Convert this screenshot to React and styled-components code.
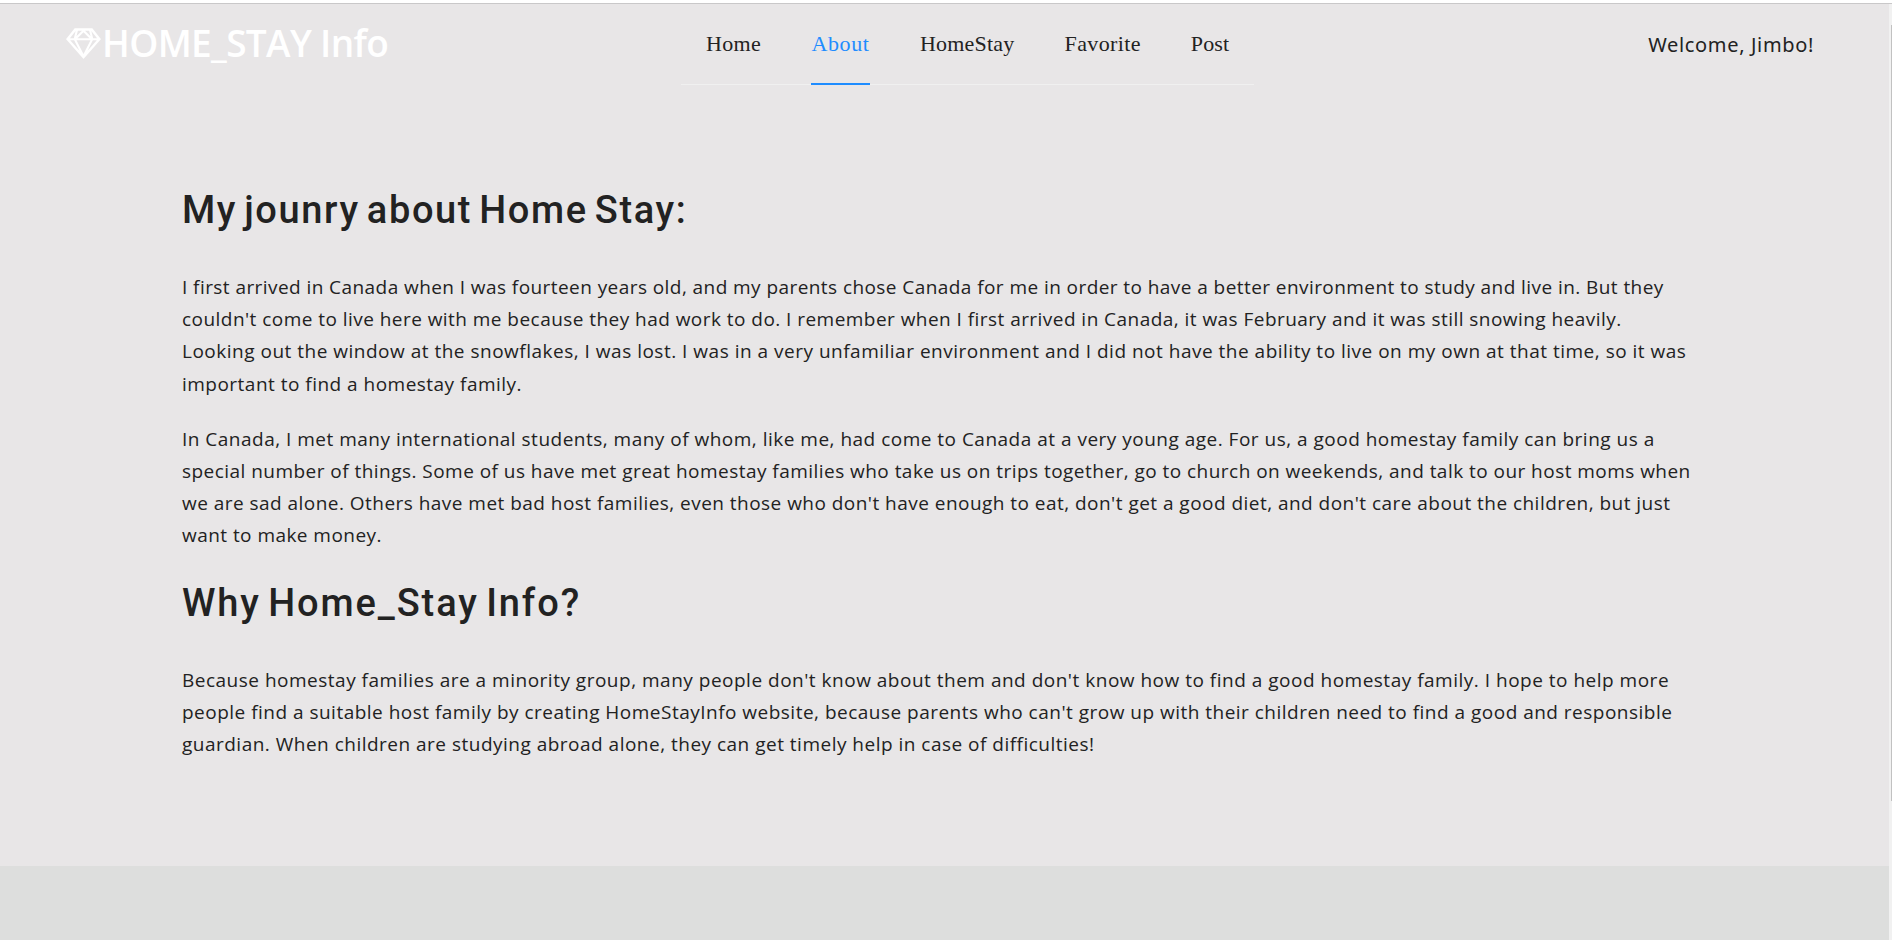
import React from "react";
import styled, { createGlobalStyle } from "styled-components";
import { AiOutlineSketch } from "react-icons/ai";

const GlobalStyle = createGlobalStyle`
  * { box-sizing: border-box; }
  body {
    margin: 0;
    background: #e8e6e7;
    color: #222;
    font-family: "Open Sans", "Noto Sans", sans-serif;
    overflow: hidden;
  }
`;

const Shell = styled.div`
  height: 940px;
  display: flex;
  flex-direction: column;
`;

const TopEdge = styled.div`
  flex: none;
  height: 4px;
  background: #fff;
  border-bottom: 1px solid #c9c8c9;
`;

const Viewport = styled.div`
  flex: 1;
  display: flex;
  min-height: 0;
`;

const Page = styled.div`
  flex: 1;
  display: flex;
  flex-direction: column;
`;

const ScrollTrack = styled.div`
  width: 3px;
  padding: 21px 0 0 2px;
  background: #f1f1f1;
`;

const ScrollThumb = styled.div`
  height: 776px;
  background: #c1c1c1;
`;

const Header = styled.header`
  height: 82px;
  flex: none;
  display: grid;
  grid-template-columns: 681px 573px 1fr;
`;

const Brand = styled.div`
  display: flex;
  align-items: center;
  height: 78px;
  padding-left: 62px;
  color: #fff;

  svg {
    width: 43px;
    height: 43px;
    flex: none;
  }
`;

const BrandName = styled.span`
  font-size: 37px;
  font-weight: 600;
  letter-spacing: -0.65px;
  line-height: 50px;
  white-space: nowrap;
  margin-left: -3px;
`;

const Nav = styled.nav`
  display: flex;
  padding: 0 25px;
  gap: 50px;
  height: 81px;
  border-bottom: 1px solid #f0f0f0;
`;

const NavItem = styled.a`
  width: ${(p) => p.$width}px;
  height: 81px;
  flex: none;
  display: flex;
  justify-content: center;
  font-family: "Liberation Serif", serif;
  font-size: 22px;
  letter-spacing: ${(p) => p.$tracking}px;
  line-height: 80px;
  white-space: nowrap;
  color: ${(p) => (p.$active ? "#1e8cff" : "#222")};
  border-bottom: 2px solid ${(p) => (p.$active ? "#1e8cff" : "transparent")};
`;

const Welcome = styled.div`
  justify-self: end;
  padding-right: 75px;
  font-family: "Noto Sans", sans-serif;
  font-size: 20px;
  letter-spacing: 0.65px;
  line-height: 82px;
  white-space: nowrap;
`;

const Article = styled.main`
  flex: 1;
  padding: 100px 182px 0;
`;

const Title = styled.h1`
  margin: 0 0 37px;
  font-family: Roboto, sans-serif;
  font-size: 38px;
  font-weight: 500;
  line-height: 48px;
  letter-spacing: ${(p) => p.$tracking}px;
  word-spacing: -4px;
`;

const Paragraph = styled.p`
  margin: 0 0 ${(p) => p.$after}px;
  font-size: 19px;
  line-height: 32.2px;
`;

const Line = styled.span`
  display: block;
  white-space: nowrap;
  letter-spacing: ${(p) => p.$tracking}px;
`;

const Footer = styled.footer`
  height: 74px;
  flex: none;
  background: #dddedd;
`;

const links = [
  { label: "Home", width: 55, tracking: 0.3 },
  { label: "About", width: 59, tracking: 0.6, active: true },
  { label: "HomeStay", width: 94.5, tracking: 0.2 },
  { label: "Favorite", width: 76.5, tracking: 0.4 },
  { label: "Post", width: 38, tracking: 0.15 },
];

const sections = [
  {
    title: "My jounry about Home Stay:",
    tracking: 1.63,
    paragraphs: [
      {
        after: 23,
        lines: [
          ["I first arrived in Canada when I was fourteen years old, and my parents chose Canada for me in order to have a better environment to study and live in. But they", 0.43],
          ["couldn't come to live here with me because they had work to do. I remember when I first arrived in Canada, it was February and it was still snowing heavily.", 0.455],
          ["Looking out the window at the snowflakes, I was lost. I was in a very unfamiliar environment and I did not have the ability to live on my own at that time, so it was", 0.5],
          ["important to find a homestay family.", 0.48],
        ],
      },
      {
        after: 27,
        lines: [
          ["In Canada, I met many international students, many of whom, like me, had come to Canada at a very young age. For us, a good homestay family can bring us a", 0.49],
          ["special number of things. Some of us have met great homestay families who take us on trips together, go to church on weekends, and talk to our host moms when", 0.46],
          ["we are sad alone. Others have met bad host families, even those who don't have enough to eat, don't get a good diet, and don't care about the children, but just", 0.465],
          ["want to make money.", 0.45],
        ],
      },
    ],
  },
  {
    title: "Why Home_Stay Info?",
    tracking: 1.9,
    paragraphs: [
      {
        after: 0,
        lines: [
          ["Because homestay families are a minority group, many people don't know about them and don't know how to find a good homestay family. I hope to help more", 0.5],
          ["people find a suitable host family by creating HomeStayInfo website, because parents who can't grow up with their children need to find a good and responsible", 0.485],
          ["guardian. When children are studying abroad alone, they can get timely help in case of difficulties!", 0.49],
        ],
      },
    ],
  },
];

export default function App() {
  return (
    <Shell>
      <GlobalStyle />
      <TopEdge />
      <Viewport>
        <Page>
          <Header>
            <Brand>
              <AiOutlineSketch />
              <BrandName>HOME_STAY Info</BrandName>
            </Brand>
            <Nav>
              {links.map((l) => (
                <NavItem key={l.label} $width={l.width} $tracking={l.tracking} $active={l.active}>
                  {l.label}
                </NavItem>
              ))}
            </Nav>
            <Welcome>Welcome, Jimbo!</Welcome>
          </Header>
          <Article>
            {sections.map((s) => (
              <section key={s.title}>
                <Title $tracking={s.tracking}>{s.title}</Title>
                {s.paragraphs.map((p, i) => (
                  <Paragraph key={i} $after={p.after}>
                    {p.lines.map(([text, tracking]) => (
                      <Line key={text} $tracking={tracking}>
                        {text}
                      </Line>
                    ))}
                  </Paragraph>
                ))}
              </section>
            ))}
          </Article>
          <Footer />
        </Page>
        <ScrollTrack>
          <ScrollThumb />
        </ScrollTrack>
      </Viewport>
    </Shell>
  );
}
